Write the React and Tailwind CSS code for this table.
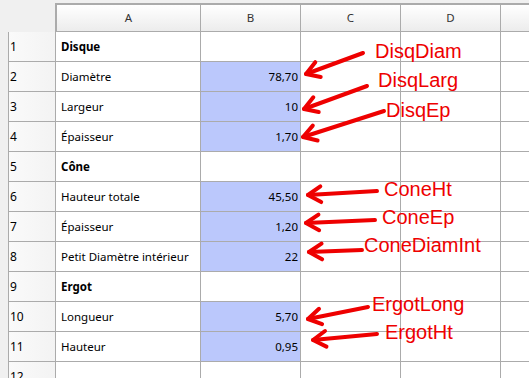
import React from 'react';

// --- DATA ---
const ROWS = [
  { n: 1, label: 'Disque', bold: true },
  { n: 2, label: 'Diamètre', value: '78,70' },
  { n: 3, label: 'Largeur', value: '10' },
  { n: 4, label: 'Épaisseur', value: '1,70' },
  { n: 5, label: 'Cône', bold: true },
  { n: 6, label: 'Hauteur totale', value: '45,50' },
  { n: 7, label: 'Épaisseur', value: '1,20' },
  { n: 8, label: 'Petit Diamètre intérieur', value: '22' },
  { n: 9, label: 'Ergot', bold: true },
  { n: 10, label: 'Longueur', value: '5,70' },
  { n: 11, label: 'Hauteur', value: '0,95' },
  { n: 12, label: '' },
];

// tail -> tip, plus label position
const ARROWS = [
  { name: 'DisqDiam', tail: [363, 53], tip: [306, 74], x: 375, y: 40 },
  { name: 'DisqLarg', tail: [367, 86], tip: [304, 109], x: 378, y: 69 },
  { name: 'DisqEp', tail: [384, 111], tip: [303, 137], x: 386, y: 99 },
  { name: 'ConeHt', tail: [377, 191], tip: [308, 195], x: 384, y: 178 },
  { name: 'ConeEp', tail: [375, 220], tip: [306, 223], x: 382, y: 206 },
  { name: 'ConeDiamInt', tail: [362, 250], tip: [309, 252], x: 364, y: 234 },
  { name: 'ErgotLong', tail: [368, 307], tip: [308, 319], x: 372, y: 293 },
  { name: 'ErgotHt', tail: [377, 334], tip: [313, 340], x: 385, y: 321 },
];

const head = (tail, tip) => {
  const ang = Math.atan2(tail[1] - tip[1], tail[0] - tip[0]);
  const len = 15, spread = 0.55;
  const a = [tip[0] + len * Math.cos(ang + spread), tip[1] + len * Math.sin(ang + spread)];
  const b = [tip[0] + len * Math.cos(ang - spread), tip[1] + len * Math.sin(ang - spread)];
  return `${a[0]},${a[1]} ${tip[0]},${tip[1]} ${b[0]},${b[1]}`;
};

const Cell = ({ w, className = '', children }) => (
  <div className={`shrink-0 h-full border-r border-b border-[#ababab] flex items-center ${w} ${className}`}>{children}</div>
);

const App = () => {
  return (
    <div className="relative w-[529px] h-[378px] overflow-hidden bg-[#f0f0f0] font-['Noto_Sans',sans-serif] text-[11.5px] text-black">
      {/* column headers */}
      <div className="flex h-[29px] mt-[3px] ml-[55px] border-t-2 border-l-2 border-[#ababab]">
        {['A', 'B', 'C', 'D', ''].map((c, i) => (
          <Cell key={i} w={i === 0 ? 'w-[144px]' : 'w-[100px]'} className="justify-center bg-gradient-to-b from-white to-[#ececec] text-[#333]">{c}</Cell>
        ))}
      </div>

      {/* rows */}
      {ROWS.map((r) => (
        <div key={r.n} className="flex h-[30px] ml-[8px]">
          <Cell w="w-[48px]" className="border-l bg-gradient-to-r from-[#fafafa] to-[#f3f3f3] pl-[1px] text-[12px]">{r.n}</Cell>
          <Cell w="w-[145px]" className={`bg-white pl-[5px] ${r.bold ? 'font-bold' : ''}`}>{r.label}</Cell>
          <Cell w="w-[100px]" className={`justify-end pr-[2px] ${r.value ? 'bg-[#bbc8fc]' : 'bg-white'}`}>{r.value}</Cell>
          <Cell w="w-[100px]" className="bg-white" />
          <Cell w="w-[100px]" className="bg-white" />
          <Cell w="w-[100px]" className="bg-white" />
        </div>
      ))}

      {/* annotations */}
      <svg className="absolute inset-0 pointer-events-none" width="529" height="378">
        {ARROWS.map((a) => (
          <g key={a.name} stroke="#ee0000" strokeWidth="4" strokeLinecap="round" strokeLinejoin="round" fill="none">
            <line x1={a.tail[0]} y1={a.tail[1]} x2={a.tip[0]} y2={a.tip[1]} />
            <polyline points={head(a.tail, a.tip)} />
          </g>
        ))}
      </svg>
      {ARROWS.map((a) => (
        <div key={a.name} className="absolute font-['Liberation_Sans',sans-serif] text-[20px] leading-[22px] text-[#ee0000]" style={{ left: a.x, top: a.y }}>
          {a.name}
        </div>
      ))}
    </div>
  );
};

export default App;
